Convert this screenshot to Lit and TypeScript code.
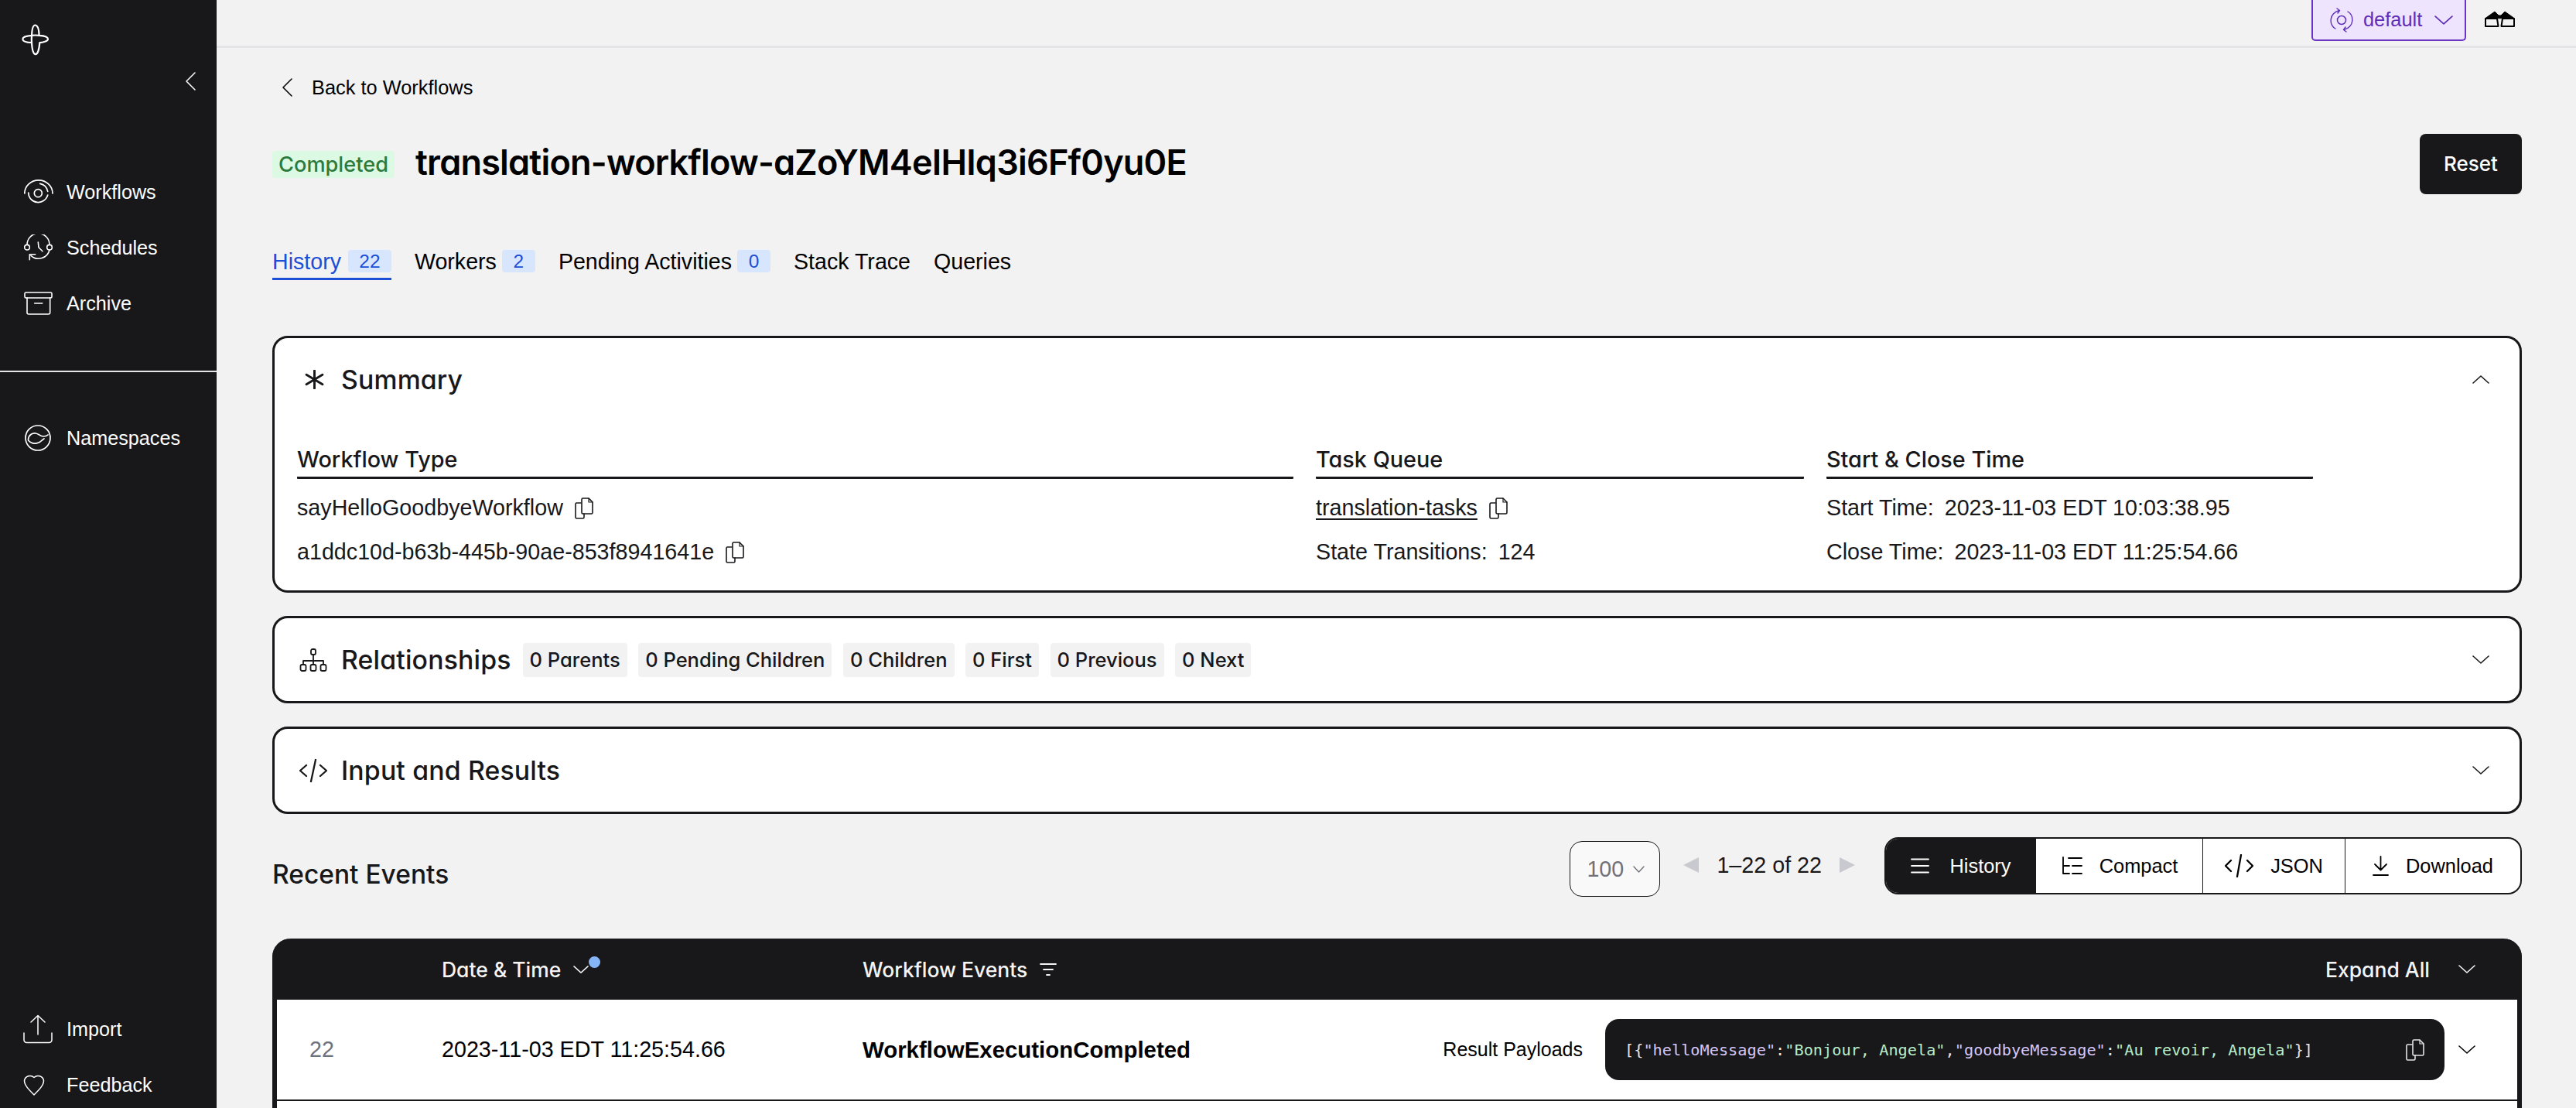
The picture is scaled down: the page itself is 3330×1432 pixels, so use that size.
import { LitElement, html, css, svg } from 'lit';
import { customElement } from 'lit/decorators.js';

const icon = (w: number, h: number, box: string, body: unknown, cls = '') =>
  html`<svg class=${cls} width=${w} height=${h} viewBox=${box} fill="none" stroke="currentColor" stroke-linecap="round" stroke-linejoin="round">${body}</svg>`;

const chevronDown = (w = 22, cls = '') =>
  icon(w, Math.round(w / 2), '0 0 22 11', svg`<path d="M1 1l10 9 10-9" stroke-width="1.6"/>`, cls);
const copyIcon = () =>
  icon(26, 28, '0 0 26 28', svg`<path d="M9 7H3.500A1.500 1.500 0 0 0 2 8.500v17A1.500 1.500 0 0 0 3.500 27h8a1.500 1.500 0 0 0 1.500-1.500V21" stroke-width="1.600"/><path d="M10 2.500A1.500 1.500 0 0 1 11.500 1H19l5 5v13.500a1.500 1.500 0 0 1-1.500 1.500h-11a1.500 1.500 0 0 1-1.500-1.500z" stroke-width="1.600"/><path d="M19 1v5h5" stroke-width="1.200"/>`, 'copy');

const navIcons = {
  workflows: icon(38, 32, '0 0 38 32', svg`<circle cx="18.300" cy="17.700" r="5" stroke-width="1.700"/><path d="M5.700 17A12.700 12.700 0 0 0 30.700 20M20.700 5.300A12.700 12.700 0 0 1 30.700 15.300" stroke-width="1.700"/><path d="M.8 18A18 17 0 0 1 37 18" stroke-width="1.700"/>`),
  schedules: icon(38, 34, '0 0 38 34', svg`<circle cx="4" cy="16.700" r="3.300" stroke-width="1.600"/><circle cx="33" cy="16.700" r="3.300" stroke-width="1.600"/><path d="M4 13.300A14.500 14.500 0 0 1 33 13.300M33 20A14.500 14.500 0 0 1 9 27.300" stroke-width="1.600"/><path d="M7.300 32.700V25.700H14.700M18.300 10L19 16.700L24 21.700" stroke-width="1.600"/>`),
  archive: icon(38, 30, '0 0 38 30', svg`<rect x="1" y="1" width="35" height="7" rx="1.500" stroke-width="1.600"/><path d="M4 8V27a2 2 0 0 0 2 2h25.700a2 2 0 0 0 2-2V8M13.700 15h10" stroke-width="1.600"/>`),
  namespaces: icon(36, 34, '0 0 36 34', svg`<circle cx="18" cy="17" r="16" stroke-width="1.700"/><path d="M5.500 19C6 13 11 10.500 15 11C19 11.500 21 15 25 15C27.500 15 29.500 14.500 31 13M5.500 20C9 24 14 25 19 23C22 22 24 19 26 18" stroke-width="1.700"/>`),
  import: icon(38, 38, '0 0 38 38', svg`<path d="M19 26V2M10 10l9-8.500L28 10M1 24v9a3.500 3.500 0 0 0 3.500 3.500h29A3.500 3.500 0 0 0 37 33v-9" stroke-width="1.500"/>`),
  feedback: icon(28, 30, '0 0 28 30', svg`<path d="M14 28C7 21 1.500 15.500 1.500 9.500A7.500 7.500 0 0 1 14 5.500a7.500 7.500 0 0 1 12.500 4C26.500 15.500 21 21 14 28z" stroke-width="1.500"/>`),
};

@customElement('app-root')
export class AppRoot extends LitElement {
  static styles = css`
    :host {
      display: flex;
      width: 100%;
      height: 100vh;
      overflow: hidden;
      background: #f2f2f2;
      color: #000;
      font-family: 'Liberation Sans', Arial, sans-serif;
      font-size: 28.7px;
    }
    svg { display: block; flex: none; }
    .head-font {
      font-family: Inter, sans-serif;
      font-feature-settings: 'cv11' 1;
      font-weight: 500;
    }
    .up { transform: rotate(180deg); }

    /* sidebar */
    .sidebar {
      flex: none;
      width: 280px;
      height: 100%;
      box-sizing: border-box;
      display: flex;
      flex-direction: column;
      background: #18181b;
      color: #fff;
      font-size: 25.2px;
      padding-bottom: 8px;
    }
    .brand { height: 226px; box-sizing: border-box; padding: 31px 27px 0 28px; display: flex; flex-direction: column; }
    .collapse { align-self: flex-end; margin-top: 21px; }
    .nav { display: flex; flex-direction: column; gap: 28px; }
    .nav a { display: flex; align-items: center; height: 44px; }
    .nav .slot { width: 86px; padding-left: 31px; box-sizing: border-box; flex: none; }
    .nav.bottom .slot { padding-left: 30px; }
    .rule { height: 2px; background: #e4e4e7; margin: 65px 0 63px; }
    .spacer { flex: 1; }

    /* page */
    .main { flex: 1; min-width: 0; height: 100%; display: flex; flex-direction: column; }
    .topbar {
      flex: none;
      height: 59px;
      border-bottom: 3px solid #e4e4e7;
      display: flex;
      justify-content: flex-end;
      align-items: flex-start;
      gap: 24px;
      padding-right: 79px;
    }
    .ns {
      width: 200px;
      height: 53px;
      box-sizing: border-box;
      display: flex;
      align-items: center;
      gap: 13px;
      padding-left: 22px;
      background: #efe4fd;
      color: #5f2eb8;
      border: 2px solid #6b35c4;
      border-top: 0;
      border-radius: 0 0 5px 5px;
      font-size: 25.4px;
    }
    .ns .label { margin-right: 3px; }
    .glasses { margin-top: 14px; }
    .content { flex: 1; min-height: 0; display: flex; flex-direction: column; padding: 0 70px 0 72px; }
    .back { display: flex; align-items: center; gap: 25px; height: 28px; margin: 37px 0 46px 13px; font-size: 25.4px; }
    .title-row { display: flex; align-items: center; height: 78px; }
    .status {
      height: 35px;
      width: 158px;
      display: flex;
      align-items: center;
      justify-content: center;
      background: #dcf9e3;
      color: #2d7a3e;
      border-radius: 4px;
      font-size: 27.2px;
      font-weight: 500;
      margin-right: 27px;
    }
    .title { font-size: 45px; font-weight: 600; letter-spacing: -0.8px; flex: 1; margin-top: -6px; white-space: nowrap; }
    .reset {
      width: 132px;
      height: 78px;
      box-sizing: border-box;
      padding-bottom: 2px;
      display: flex;
      align-items: center;
      justify-content: center;
      background: #18181b;
      color: #fff;
      border-radius: 8px;
      font-size: 26px;
    }
    .tabs { display: flex; gap: 30px; margin-top: 72px; height: 39px; font-size: 28.6px; }
    .tab { display: flex; align-items: flex-start; gap: 9px; line-height: 30px; }
    .tab.on { color: #1d4ed8; border-bottom: 3px solid #1d4ed8; }
    .count { width: 43px; height: 29px; margin-left: -2px; display: flex; align-items: center; justify-content: center; background: #d8e6fd; color: #1d4ed8; border-radius: 4px; font-size: 24.5px; }
    .count.wide { width: 56px; margin-left: 0; }

    .cards { display: flex; flex-direction: column; gap: 30px; margin-top: 72px; }
    .card { background: #fff; border: 3px solid #18181b; border-radius: 20px; }
    .card-head { display: flex; align-items: center; height: 107px; padding: 0 39px 0 32px; color: #18181b; }
    .card-head .ic { width: 54px; flex: none; display: flex; }
    .star { margin-left: 7px; }
    .card-title { font-size: 33.8px; letter-spacing: 0.15px; }
    .chips { display: flex; gap: 14.5px; margin-left: 15px; }
    .chip { height: 44px; padding: 0 9px; display: flex; align-items: center; background: #f2f2f2; border-radius: 4px; font-size: 25.5px; }
    .push { margin-left: auto; color: #18181b; }
    .sum-grid { display: grid; grid-template-columns: 1288px 631px 629px; column-gap: 29px; padding: 27px 29px 21px; }
    .sum-grid .col { min-width: 0; }
    .col h3 { margin: 0 0 9px; height: 45px; display: flex; align-items: center; border-bottom: 3px solid #18181b; border-radius: 1px; color: #18181b; font-size: 28.8px; font-weight: 500; font-family: Inter, sans-serif; font-feature-settings: 'cv11' 1; }
    .line { height: 57px; display: flex; align-items: center; gap: 14px; white-space: nowrap; color: #18181b; }
    .line u { text-underline-offset: 4px; text-decoration-thickness: 2px; }

    .events-bar { display: flex; align-items: flex-start; height: 77px; margin-top: 30px; margin-bottom: 54px; }
    .events-bar h2 { margin: 28px auto 0 0; font-size: 33.5px; line-height: 40px; font-weight: 500; color: #18181b; }
    .select {
      width: 117px;
      height: 72px;
      margin-top: 5px;
      box-sizing: border-box;
      display: flex;
      align-items: center;
      gap: 12px;
      padding-left: 21px;
      background: #f9f9f9;
      border: 1.5px solid #18181b;
      border-radius: 16px;
      color: #71717a;
    }
    .pager { display: flex; align-items: center; height: 72px; margin: 0 38px 0 30px; gap: 23px; color: #18181b; }
    .tri { width: 0; height: 0; border-style: solid; border-width: 10px 0; border-color: transparent; }
    .tri.prev { border-right: 20px solid #c9c9d0; }
    .tri.next { border-left: 20px solid #c9c9d0; }
    .views {
      display: grid;
      grid-template-columns: 193px 216px 184px 227px;
      height: 74px;
      box-sizing: border-box;
      background: #fff;
      border: 2px solid #18181b;
      border-radius: 18px;
      overflow: hidden;
      font-size: 25.4px;
    }
    .view { display: flex; align-items: center; justify-content: center; gap: 22px; border-left: 1.5px solid #18181b; }
    .view:first-child { border-left: 0; background: #18181b; color: #fff; gap: 27px; }

    .table {
      flex: 1;
      min-height: 0;
      background: #fff;
      border: solid #18181b;
      border-width: 0 6px;
      border-radius: 24px 24px 0 0;
    }
    .row { display: grid; grid-template-columns: 213px 544px auto 1fr 94px; align-items: center; }
    .row.th { height: 79px; margin: 0 -6px; padding: 0 6px; background: #18181b; color: #f4f4f5; border-radius: 24px 24px 0 0; font-size: 26.5px; }
    .row.td { height: 129px; border-bottom: 2px solid #18181b; }
    .row > div { display: flex; align-items: center; white-space: nowrap; }
    .num { padding-left: 42px; color: #71717a; }
    .th .gap { gap: 16px; }
    .dot { width: 15px; height: 15px; border-radius: 50%; background: #85b4f7; margin: -18px 0 0 -16px; }
    .expand { justify-content: flex-end; padding-right: 19px; }
    .chev { padding-left: 18px; }
    .event { font-size: 29.4px; font-weight: 700; }
    .payload { justify-content: flex-end; gap: 29px; font-size: 25px; }
    .code {
      width: 1085px;
      height: 79px;
      box-sizing: border-box;
      display: flex;
      align-items: center;
      justify-content: space-between;
      padding: 0 25px;
      background: #18181b;
      color: #e4e4e7;
      border-radius: 18px;
      font-family: 'DejaVu Sans Mono', monospace;
      font-size: 20.25px;
      white-space: pre;
    }
    .k { color: #d5c6f6; }
    .s { color: #b7ecc7; }
  `;

  render() {
    return html`
      <aside class="sidebar">
        <div class="brand">
          ${icon(36, 41, '18 18 108 122', svg`<path d="M70 22C80 22 85 40 86 62C105 63 120 68 120 76C120 84 100 90 88 90C86 115 80 135 72 135C62 135 58 110 57 90C35 89 22 84 22 76C22 68 40 63 57 62C58 40 62 22 70 22ZM57 62C56 75 56 80 57 90M57 62C70 60 78 61 86 62" stroke-width="6.500"/>`)}
          <span class="collapse">${icon(13, 24, '0 0 13 24', svg`<path d="M12 1L1 12l11 11" stroke-width="1.500"/>`)}</span>
        </div>
        <nav class="nav">
          <a><span class="slot">${navIcons.workflows}</span>Workflows</a>
          <a><span class="slot">${navIcons.schedules}</span>Schedules</a>
          <a><span class="slot">${navIcons.archive}</span>Archive</a>
        </nav>
        <div class="rule"></div>
        <nav class="nav"><a><span class="slot">${navIcons.namespaces}</span>Namespaces</a></nav>
        <div class="spacer"></div>
        <nav class="nav bottom">
          <a><span class="slot">${navIcons.import}</span>Import</a>
          <a><span class="slot">${navIcons.feedback}</span>Feedback</a>
        </nav>
      </aside>
      <div class="main">
        <header class="topbar">
          <div class="ns">
            ${icon(30, 32, '0 0 30 32', svg`<circle cx="15" cy="16" r="5.500" stroke-width="1.500"/><path d="M7 27C2 24 .8 19 1.200 15 1.600 9.500 6 5 12 3.500M9 1l3.500 2.500L10 7M23 5c5 3 6.200 8 5.800 12-.4 5.500-4.800 10-10.800 11.500M21 31l-3.500-2.500L20 25" stroke-width="1.400"/>`)}
            <span class="label">default</span>
            ${chevronDown(24)}
          </div>
          <span class="glasses">${icon(39, 21, '0 0 39 21', svg`<path d="M1 9.500L13 1l5 5h3l5-5 12 8.500z" fill="currentColor" stroke-width="1"/><path d="M1 10h15l1.500 10H1zM38 10H23l-1.500 10H38z" fill="#f2f2f2" stroke-width="2"/>`)}</span>
        </header>
        <div class="content">
          <div class="back">${icon(13, 24, '0 0 13 24', svg`<path d="M12 1L1 12l11 11" stroke-width="1.500"/>`)}<span>Back to Workflows</span></div>
          <div class="title-row">
            <span class="status head-font">Completed</span>
            <span class="title head-font">translation-workflow-aZoYM4eIHIq3i6Ff0yu0E</span>
            <span class="reset head-font">Reset</span>
          </div>
          <div class="tabs">
            <span class="tab on">History <span class="count wide">22</span></span>
            <span class="tab">Workers <span class="count">2</span></span>
            <span class="tab">Pending Activities <span class="count">0</span></span>
            <span class="tab">Stack Trace</span>
            <span class="tab">Queries</span>
          </div>

          <div class="cards">
            <section class="card">
              <div class="card-head">
                <span class="ic">${icon(25, 25, '0 0 24 24', svg`<path d="M12 1v22M2 6l20 12M22 6L2 18" stroke-width="2.800"/>`, 'star')}</span>
                <span class="card-title head-font">Summary</span>
                <span class="push">${chevronDown(22, 'up')}</span>
              </div>
              <div class="sum-grid">
                <div class="col">
                  <h3>Workflow Type</h3>
                  <div class="line">sayHelloGoodbyeWorkflow ${copyIcon()}</div>
                  <div class="line">a1ddc10d-b63b-445b-90ae-853f8941641e ${copyIcon()}</div>
                </div>
                <div class="col">
                  <h3>Task Queue</h3>
                  <div class="line"><u>translation-tasks</u> ${copyIcon()}</div>
                  <div class="line"><span>State Transitions:</span><span>124</span></div>
                </div>
                <div class="col">
                  <h3>Start &amp; Close Time</h3>
                  <div class="line"><span>Start Time:</span><span>2023-11-03 EDT 10:03:38.95</span></div>
                  <div class="line"><span>Close Time:</span><span>2023-11-03 EDT 11:25:54.66</span></div>
                </div>
              </div>
            </section>
            <section class="card">
              <div class="card-head">
                <span class="ic">${icon(36, 30, '0 0 36 30', svg`<rect x="15" y="1" width="6" height="7" rx="2" stroke-width="1.800"/><path d="M18 8v8M5 20v-4h26v4M18 16v4" stroke-width="1.800"/><rect x="1.500" y="21" width="7" height="8" rx="2" stroke-width="1.800"/><rect x="14.500" y="21" width="7" height="8" rx="2" stroke-width="1.800"/><rect x="27.500" y="21" width="7" height="8" rx="2" stroke-width="1.800"/>`)}</span>
                <span class="card-title head-font">Relationships</span>
                <span class="chips head-font">
                  <span class="chip">0 Parents</span>
                  <span class="chip">0 Pending Children</span>
                  <span class="chip">0 Children</span>
                  <span class="chip">0 First</span>
                  <span class="chip">0 Previous</span>
                  <span class="chip">0 Next</span>
                </span>
                <span class="push">${chevronDown(22)}</span>
              </div>
            </section>
            <section class="card">
              <div class="card-head">
                <span class="ic">${icon(36, 32, '0 0 36 32', svg`<path d="M9 9l-8 7 8 7M27 9l8 7-8 7M21 2l-6 28" stroke-width="2.300"/>`)}</span>
                <span class="card-title head-font">Input and Results</span>
                <span class="push">${chevronDown(22)}</span>
              </div>
            </section>
          </div>

          <div class="events-bar">
            <h2 class="head-font">Recent Events</h2>
            <div class="select"><span>100</span>${icon(15, 9, '0 0 15 9', svg`<path d="M1 1l6.500 7L14 1" stroke-width="1.400"/>`)}</div>
            <div class="pager"><span class="tri prev"></span><span>1–22 of 22</span><span class="tri next"></span></div>
            <div class="views">
              <div class="view">${icon(24, 20, '0 0 24 20', svg`<path d="M1 1.500h22M1 10h22M1 18.500h22" stroke-width="1.800"/>`)}History</div>
              <div class="view">${icon(28, 26, '0 0 28 26', svg`<path d="M10 3h17M15 13h12M15 23h12M3 2v21h8M3 13h8" stroke-width="1.800"/>`)}Compact</div>
              <div class="view">${icon(37, 30, '0 0 37 30', svg`<path d="M8 8l-7 7 7 7M29 8l7 7-7 7M21 1l-5 28" stroke-width="2.300"/>`)}JSON</div>
              <div class="view">${icon(21, 26, '0 0 21 26', svg`<path d="M10.500 1v17M3 11l7.500 7.500L18 11M1 25h19" stroke-width="1.800"/>`)}Download</div>
            </div>
          </div>

          <div class="table">
            <div class="row th head-font">
              <div></div>
              <div class="gap">Date &amp; Time ${chevronDown(20)}<span class="dot"></span></div>
              <div class="gap">Workflow Events ${icon(22, 18, '0 0 22 18', svg`<path d="M1 2h20M5 9h12M9 16h4" stroke-width="1.800"/>`)}</div>
              <div class="expand">Expand All</div>
              <div class="chev">${chevronDown(22)}</div>
            </div>
            <div class="row td">
              <div class="num">22</div>
              <div>2023-11-03 EDT 11:25:54.66</div>
              <div class="event">WorkflowExecutionCompleted</div>
              <div class="payload">
                <span>Result Payloads</span>
                <span class="code"><span>[{<span class="k">"helloMessage"</span>:<span class="s">"Bonjour, Angela"</span>,<span class="k">"goodbyeMessage"</span>:<span class="s">"Au revoir, Angela"</span>}]</span>${copyIcon()}</span>
              </div>
              <div class="chev">${chevronDown(22)}</div>
            </div>
          </div>
        </div>
      </div>
    `;
  }
}
